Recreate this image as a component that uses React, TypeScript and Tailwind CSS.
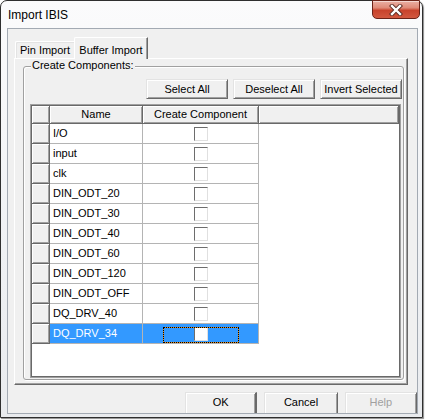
import React from 'react';

const ROWS = [
  'I/O',
  'input',
  'clk',
  'DIN_ODT_20',
  'DIN_ODT_30',
  'DIN_ODT_40',
  'DIN_ODT_60',
  'DIN_ODT_120',
  'DIN_ODT_OFF',
  'DQ_DRV_40',
  'DQ_DRV_34',
];

// classic raised 3D edge (header cells, row headers)
const RAISED =
  'bg-[#f0f0f0] border-r border-b border-[#696969] shadow-[inset_1px_1px_0_#fff,inset_-1px_-1px_0_#a0a0a0]';

const BUTTON =
  'flex items-center justify-center bg-[#f0f0f0] border border-t-[#e3e3e3] border-l-[#e3e3e3] border-r-[#696969] border-b-[#696969] shadow-[inset_1px_1px_0_#fff,inset_-1px_-1px_0_#a0a0a0] text-[11px] leading-none';

function CloseButton() {
  return (
    <div className="-mt-px mr-[2px] ml-auto flex h-[19px] w-[48px] items-center justify-center rounded-b-[5px] border border-[#6b2318] bg-[linear-gradient(180deg,#eab0a4_0%,#df8a78_40%,#c8432c_55%,#d2583f_100%)] shadow-[inset_0_1px_0_rgba(255,255,255,0.5)]">
      <svg width="14" height="12" viewBox="0 0 14 12">
        <path d="M3 2 L11 10 M11 2 L3 10" stroke="#5a2a22" strokeWidth="4.2" strokeLinecap="square" />
        <path d="M3 2 L11 10 M11 2 L3 10" stroke="#ffffff" strokeWidth="2.4" strokeLinecap="square" />
      </svg>
    </div>
  );
}

function CheckBox() {
  return (
    <div className="h-[14px] w-[14px] border border-t-[#6d6d6d] border-l-[#6d6d6d] border-r-[#e0e0e0] border-b-[#e0e0e0] bg-white" />
  );
}

function GridRow({ name, selected }: { name: string; selected: boolean }) {
  return (
    <div className="flex h-[20px]">
      <div className={`w-[18px] ${RAISED}`} />
      <div
        className={`flex w-[93px] items-center border-r border-b border-[#b4b4b4] pl-[3px] ${
          selected ? 'bg-[#3399ff] text-white' : 'text-black'
        }`}
      >
        {name}
      </div>
      <div
        className={`relative flex w-[116px] items-center justify-center border-r border-b border-[#b4b4b4] ${
          selected ? 'bg-[#3399ff]' : ''
        }`}
      >
        <CheckBox />
        {selected ? (
          <>
            <div className="absolute top-[3px] left-[20px] h-[16px] w-[76px] border border-[#e8901c]" />
            <div className="absolute top-[3px] left-[20px] h-[16px] w-[76px] border border-dotted border-black" />
          </>
        ) : null}
      </div>
    </div>
  );
}

export default function App() {
  return (
    <div className="h-[420px] w-[425px] bg-white font-['Liberation_Sans',Arial,sans-serif] text-black">
      <div className="h-[418px] w-[423px] rounded-t-[7px] border border-[#2f2f2f] bg-[linear-gradient(180deg,#fbfbfc_0%,#eff1f4_60%,#e9ebee_100%)] shadow-[1px_1px_1px_rgba(0,0,0,0.45)]">
        {/* title bar */}
        <div className="flex h-[27px] items-start">
          <span className="pt-[7px] pl-[7px] text-[12px] leading-[14px]">Import IBIS</span>
          <CloseButton />
        </div>

        {/* client area */}
        <div className="ml-[6px] h-[386px] w-[411px] overflow-hidden border border-[#a3aab3] bg-[#f0f0f0] text-[11px]">
          {/* tabs */}
          <div className="flex h-[29px] items-end pl-[7px]">
            <div className="flex h-[17px] w-[59px] items-center justify-center rounded-tl-[2px] border-t border-l border-white pt-[1px] shadow-[inset_1px_1px_0_#e3e3e3]">
              Pin Import
            </div>
            <div className="relative z-10 -mb-px flex h-[22px] w-[74px] items-start justify-center rounded-tl-[2px] border-t border-l border-r border-t-white border-l-white border-r-[#696969] bg-[#f0f0f0] pt-[4px] shadow-[inset_-1px_0_0_#a0a0a0]">
              Buffer Import
            </div>
          </div>

          {/* tab page */}
          <div className="ml-[6px] h-[327px] w-[394px] border border-t-white border-l-white border-r-[#696969] border-b-[#696969] shadow-[inset_-1px_-1px_0_#a0a0a0]">
            {/* group box */}
            <div className="relative mt-[7px] ml-[8px] h-[314px] w-[381px] rounded-[3px] border border-[#a0a0a0] shadow-[1px_1px_0_#fff,inset_1px_1px_0_#fff]">
              <span className="absolute -top-[8px] left-[7px] bg-[#f0f0f0] px-[1px] leading-[13px]">
                Create Components:
              </span>

              <div className="mt-[12px] flex justify-end gap-[5px] pr-[1px]">
                <div className={`h-[20px] w-[82px] ${BUTTON}`}>Select All</div>
                <div className={`h-[20px] w-[82px] ${BUTTON}`}>Deselect All</div>
                <div className={`h-[20px] w-[82px] ${BUTTON}`}>Invert Selected</div>
              </div>

              {/* grid */}
              <div className="mt-[5px] ml-[6px] h-[274px] w-[371px] border border-[#a0a0a0]">
                <div className="h-full w-full border border-[#696969] bg-white">
                  <div className="flex h-[18px]">
                    <div className={`w-[18px] ${RAISED}`} />
                    <div className={`flex w-[93px] items-center justify-center ${RAISED}`}>Name</div>
                    <div className={`flex w-[116px] items-center justify-center ${RAISED}`}>Create Component</div>
                    <div className={`flex-1 ${RAISED}`} />
                  </div>
                  {ROWS.map((name, i) => (
                    <GridRow key={name} name={name} selected={i === ROWS.length - 1} />
                  ))}
                </div>
              </div>
            </div>
          </div>

          {/* dialog buttons */}
          <div className="mt-[7px] ml-[177px] flex gap-[7px]">
            <div className={`h-[24px] w-[73px] border-r-2 pb-[3px] ${BUTTON}`}>OK</div>
            <div className={`h-[24px] w-[74px] pb-[3px] ${BUTTON}`}>Cancel</div>
            <div className={`h-[24px] w-[73px] pb-[3px] text-[#a0a0a0] ${BUTTON}`}>Help</div>
          </div>
        </div>
      </div>
    </div>
  );
}
